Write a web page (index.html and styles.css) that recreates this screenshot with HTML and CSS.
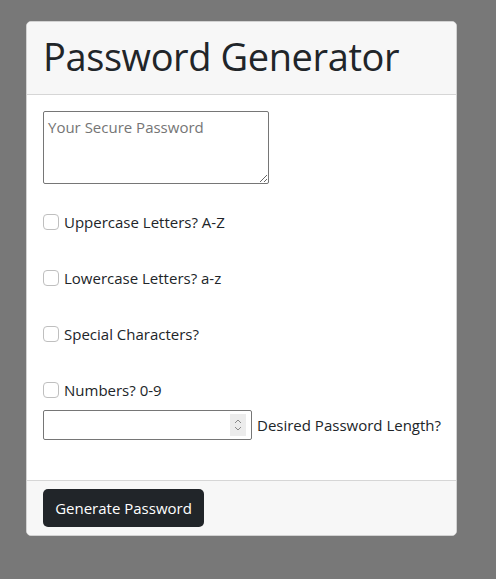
FILE: index.html
```html
<!DOCTYPE html>
<html>
<head>
<meta charset="utf-8">
<link rel="stylesheet" href="styles.css">
</head>
<body>
<div class="page">
  <div class="card">
    <div class="card-header">
      <h1 class="title">Password Generator</h1>
    </div>
    <div class="card-body">
      <textarea class="output" placeholder="Your Secure Password"></textarea>
      <label class="check-row first"><span class="check"></span><span>Uppercase Letters? A-Z</span></label>
      <label class="check-row"><span class="check"></span><span>Lowercase Letters? a-z</span></label>
      <label class="check-row"><span class="check"></span><span>Special Characters?</span></label>
      <label class="check-row"><span class="check"></span><span>Numbers? 0-9</span></label>
      <div class="length-row">
        <div class="num-input">
          <span class="spinner">
            <svg width="14" height="20" viewBox="0 0 14 20">
              <path d="M4 8 L7 5 L10 8" fill="none" stroke="#8a8a8a" stroke-width="1"/>
              <path d="M4 12 L7 15 L10 12" fill="none" stroke="#8a8a8a" stroke-width="1"/>
            </svg>
          </span>
        </div>
        <span class="length-label">Desired Password Length?</span>
      </div>
    </div>
    <div class="card-footer">
      <button class="btn">Generate Password</button>
    </div>
  </div>
</div>
</body>
</html>
```

FILE: styles.css
```css
html, body {
  margin: 0;
  padding: 0;
}
body {
  background: #787878;
  font-family: "Open Sans", "Noto Sans", sans-serif;
  color: #212529;
  font-size: 16px;
}
.page {
  padding: 21px 0 0 26px;
}
.card {
  width: 429px;
  background: #fff;
  border: 1px solid #d2d2d2;
  border-radius: 5px;
  overflow: hidden;
}
.card-header {
  background: #f7f7f7;
  border-bottom: 1px solid #d6d6d6;
  padding: 8px 16px;
}
.title {
  margin: 0 0 8px 0;
  font-size: 38px;
  font-weight: 400;
  line-height: 48px;
  letter-spacing: -0.4px;
  position: relative;
  top: 2px;
}
.card-body {
  padding: 16px 16px 40px 16px;
  display: flex;
  flex-direction: column;
  align-items: flex-start;
}
.output {
  box-sizing: border-box;
  width: 226px;
  height: 73px;
  border: 1px solid #767676;
  border-radius: 2px;
  padding: 5px 4px;
  font-family: inherit;
  font-size: 15px;
  resize: vertical;
  margin: 0;
}
.output::placeholder {
  color: #757575;
}
.check-row {
  display: flex;
  align-items: center;
  gap: 5px;
  height: 24px;
  margin-top: 32px;
  font-size: 15px;
}
.check-row.first {
  margin-top: 26px;
}
.check {
  box-sizing: border-box;
  width: 16px;
  height: 16px;
  border: 1px solid #bfbfbf;
  border-radius: 4px;
  background: #fff;
}
.length-row {
  display: flex;
  align-items: center;
  gap: 5px;
  margin-top: 8px;
  white-space: nowrap;
}
.num-input {
  flex: none;
  box-sizing: border-box;
  width: 209px;
  height: 30px;
  border: 1px solid #767676;
  border-radius: 2px;
  display: flex;
  align-items: center;
  justify-content: flex-end;
  padding-right: 5px;
}
.spinner {
  display: flex;
  align-items: center;
  justify-content: center;
  width: 16px;
  height: 22px;
  background: #ececec;
}
.length-label {
  flex: none;
  font-size: 15px;
}
.card-footer {
  background: #f7f7f7;
  border-top: 1px solid #d6d6d6;
  padding: 8px 16px;
}
.btn {
  display: block;
  height: 38px;
  width: 161px;
  background: #212529;
  color: #fff;
  border: none;
  border-radius: 5px;
  font-family: inherit;
  font-size: 15px;
  padding: 0 12px;
}
```
